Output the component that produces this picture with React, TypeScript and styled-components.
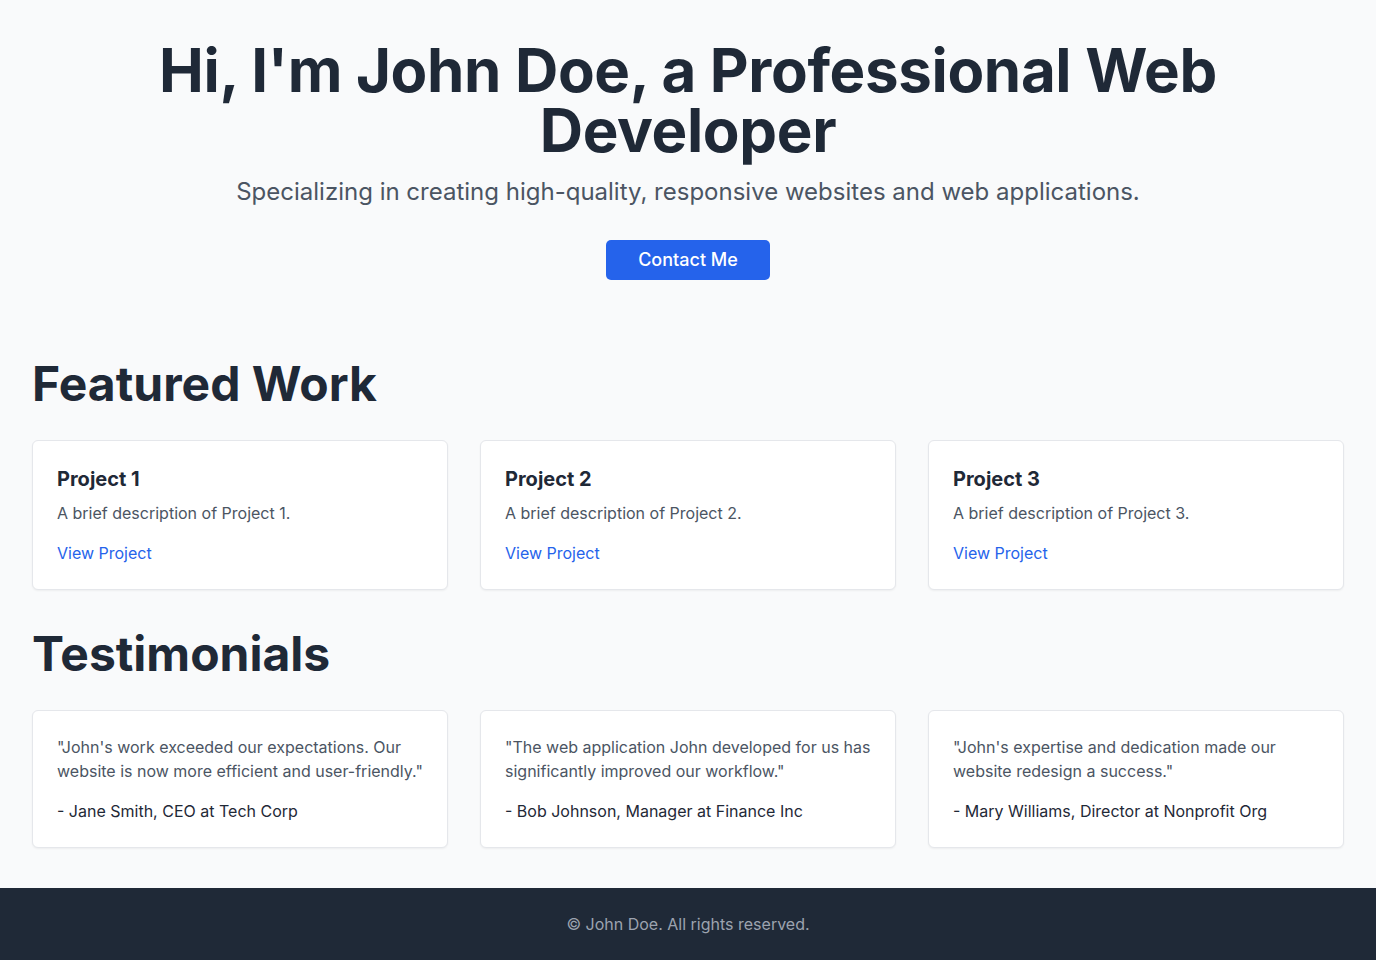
import React from "react";
import styled, { createGlobalStyle } from "styled-components";

const GlobalStyle = createGlobalStyle`
  * {
    box-sizing: border-box;
  }
  body {
    margin: 0;
    background: #f9fafb;
    font-family: Inter, "Noto Sans", sans-serif;
    color: #1f2937;
  }
`;

const Page = styled.div`
  min-height: 100vh;
  display: flex;
  flex-direction: column;
`;

const Main = styled.main`
  padding: 40px 32px;
`;

const Hero = styled.section`
  text-align: center;
  margin-bottom: 80px;
`;

const HeroTitle = styled.h1`
  margin: 0 0 16px;
  font-size: 60px;
  line-height: 60px;
  font-weight: 700;
  letter-spacing: -0.35px;
  color: #1f2937;
`;

const HeroText = styled.p`
  margin: 0 0 32px;
  font-size: 24px;
  line-height: 32px;
  color: #4b5563;
`;

const PrimaryButton = styled.a`
  display: inline-block;
  padding: 6px 32px;
  background: #2563eb;
  color: #fff;
  border-radius: 5px;
  font-size: 18px;
  line-height: 28px;
  font-weight: 500;
  text-decoration: none;
`;

const Section = styled.section`
  & + & {
    margin-top: 40px;
  }
`;

const SectionTitle = styled.h2`
  margin: 0 0 32px;
  font-size: 48px;
  line-height: 48px;
  font-weight: 700;
  color: #1f2937;
`;

const Grid = styled.div`
  display: grid;
  grid-template-columns: repeat(3, 1fr);
  gap: 32px;
`;

const Card = styled.div`
  background: #fff;
  border: 1px solid #e5e7eb;
  border-radius: 6px;
  box-shadow: 0 1px 2px rgba(0, 0, 0, 0.05);
  padding: 24px;
`;

const CardTitle = styled.h3`
  margin: 0 0 8px;
  font-size: 20px;
  line-height: 28px;
  font-weight: 700;
  color: #1f2937;
`;

const CardText = styled.p`
  margin: 0 0 16px;
  font-size: 16px;
  line-height: 24px;
  color: #4b5563;
`;

const CardLink = styled.a`
  font-size: 16px;
  line-height: 24px;
  color: #2563eb;
  text-decoration: none;
`;

const Author = styled.p`
  margin: 0;
  font-size: 16px;
  line-height: 24px;
  color: #1f2937;
`;

const Footer = styled.footer`
  margin-top: auto;
  background: #1f2937;
  color: #9ca3af;
  text-align: center;
  padding: 24px;
  font-size: 16px;
  line-height: 24px;
`;

const projects = [1, 2, 3];

const testimonials = [
  {
    quote:
      "\"John's work exceeded our expectations. Our website is now more efficient and user-friendly.\"",
    author: "- Jane Smith, CEO at Tech Corp",
  },
  {
    quote:
      "\"The web application John developed for us has significantly improved our workflow.\"",
    author: "- Bob Johnson, Manager at Finance Inc",
  },
  {
    quote:
      "\"John's expertise and dedication made our website redesign a success.\"",
    author: "- Mary Williams, Director at Nonprofit Org",
  },
];

function App() {
  return (
    <Page>
      <GlobalStyle />
      <Main>
        <Hero>
          <HeroTitle>Hi, I'm John Doe, a Professional Web Developer</HeroTitle>
          <HeroText>
            Specializing in creating high-quality, responsive websites and web
            applications.
          </HeroText>
          <PrimaryButton href="#contact">Contact Me</PrimaryButton>
        </Hero>

        <Section>
          <SectionTitle>Featured Work</SectionTitle>
          <Grid>
            {projects.map((n) => (
              <Card key={n}>
                <CardTitle>Project {n}</CardTitle>
                <CardText>A brief description of Project {n}.</CardText>
                <CardLink href="#">View Project</CardLink>
              </Card>
            ))}
          </Grid>
        </Section>

        <Section>
          <SectionTitle>Testimonials</SectionTitle>
          <Grid>
            {testimonials.map((t) => (
              <Card key={t.author}>
                <CardText>{t.quote}</CardText>
                <Author>{t.author}</Author>
              </Card>
            ))}
          </Grid>
        </Section>
      </Main>
      <Footer>© John Doe. All rights reserved.</Footer>
    </Page>
  );
}

export default App;
